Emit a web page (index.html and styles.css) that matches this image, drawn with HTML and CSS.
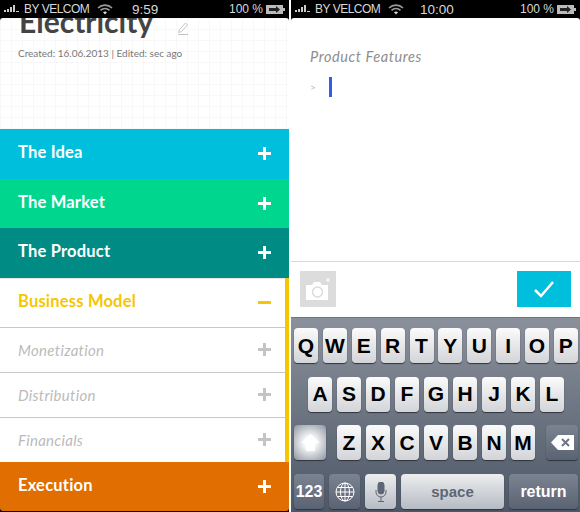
FILE: index.html
```html
<!DOCTYPE html>
<html lang="en">
  <head>
    <meta charset="UTF-8" />
    <title>Electricity</title>
    <link rel="stylesheet" href="styles.css">
  </head>
  <body>
    <div class="phones">
      <section class="screen screen-left">
        <div class="statusbar">
          <svg class="signal" width="16" height="8" viewBox="0 0 16 8"><path d="M0 5h2v2H0zM3 4h2v3H3zM6 2h2v5H6zM9 0h2v7H9zM12 6h3v1h-3z" fill="#ccc"/></svg>
          <span class="carrier">BY VELCOM</span>
          <svg class="wifi" width="16" height="11" viewBox="0 0 16 11"><path d="M1 4a10 10 0 0 1 14 0M3.500 6.300a6.500 6.500 0 0 1 9 0" fill="none" stroke="#999" stroke-width="1.600"/><path d="M6 8.300a3 3 0 0 1 4 0L8 10.500z" fill="#ddd"/></svg>
          <span class="clock clock-left">9:59</span>
          <span class="battery-text">100 %</span>
          <svg class="battery" width="19" height="9" viewBox="0 0 19 9"><path d="M0 0h17v3h2v3h-2v3H0z" fill="#bbb"/><path d="M3 3h7V1l4 3.500L10 8V6H3z" fill="#222"/></svg>
        </div>
        <div class="doc-head">
          <div class="doc-title-row">
            <h1 class="doc-title">Electricity</h1>
            <svg class="pencil" width="12" height="13" viewBox="0 0 12 13"><path d="M1 12.500h10M1.500 10.500l1-3L8.500 1l2 2-6 6.500z" fill="none" stroke="#c4c4c4"/></svg>
          </div>
          <p class="doc-meta">Created: 16.06.2013 | Edited: sec ago</p>
        </div>
        <div class="section section-idea"><span>The Idea</span><i class="plus"></i></div>
        <div class="section section-market"><span>The Market</span><i class="plus"></i></div>
        <div class="section section-product"><span>The Product</span><i class="plus"></i></div>
        <div class="open-group">
          <div class="section section-business"><span>Business Model</span><i class="minus"></i></div>
          <div class="sub"><span>Monetization</span><i class="plus plus-grey"></i></div>
          <div class="sub"><span>Distribution</span><i class="plus plus-grey"></i></div>
          <div class="sub"><span>Financials</span><i class="plus plus-grey"></i></div>
        </div>
        <div class="section section-execution"><span>Execution</span><i class="plus"></i></div>
      </section>

      <section class="screen screen-right">
        <div class="statusbar">
          <svg class="signal" width="16" height="8" viewBox="0 0 16 8"><path d="M0 5h2v2H0zM3 4h2v3H3zM6 2h2v5H6zM9 0h2v7H9zM12 6h3v1h-3z" fill="#ccc"/></svg>
          <span class="carrier">BY VELCOM</span>
          <svg class="wifi" width="16" height="11" viewBox="0 0 16 11"><path d="M1 4a10 10 0 0 1 14 0M3.500 6.300a6.500 6.500 0 0 1 9 0" fill="none" stroke="#999" stroke-width="1.600"/><path d="M6 8.300a3 3 0 0 1 4 0L8 10.500z" fill="#ddd"/></svg>
          <span class="clock clock-right">10:00</span>
          <span class="battery-text">100 %</span>
          <svg class="battery" width="19" height="9" viewBox="0 0 19 9"><path d="M0 0h17v3h2v3h-2v3H0z" fill="#bbb"/><path d="M3 3h7V1l4 3.500L10 8V6H3z" fill="#222"/></svg>
        </div>
        <div class="editor">
          <h2 class="editor-title">Product Features</h2>
          <div class="editor-line"><span class="prompt">&gt;</span><span class="caret"></span></div>
        </div>
        <div class="toolbar">
          <div class="photo-btn">
            <svg width="26" height="24" viewBox="0 0 26 24"><path d="M1 8h6l2-3h6l2 3h6v15H1z" fill="#fff"/><circle cx="12.500" cy="15" r="5" fill="none" stroke="#dcdcdc" stroke-width="1.500"/><path d="M21 3h4M23 1v4" stroke="#fff"/></svg>
          </div>
          <div class="done-btn">
            <svg width="22" height="18" viewBox="0 0 22 18"><path d="M2 10l6 6L20 2" fill="none" stroke="#fff" stroke-width="2.500"/></svg>
          </div>
        </div>
        <div class="keyboard">
          <div class="key-row">
            <b class="key">Q</b><b class="key">W</b><b class="key">E</b><b class="key">R</b><b class="key">T</b><b class="key">Y</b><b class="key">U</b><b class="key">I</b><b class="key">O</b><b class="key">P</b>
          </div>
          <div class="key-row key-row-home">
            <b class="key">A</b><b class="key">S</b><b class="key">D</b><b class="key">F</b><b class="key">G</b><b class="key">H</b><b class="key">J</b><b class="key">K</b><b class="key">L</b>
          </div>
          <div class="key-row">
            <b class="key key-fn key-shift">
              <svg width="19" height="17" viewBox="0 0 19 17"><path d="M9.500 0 19 9h-5v8H5V9H0z" fill="#fff"/></svg>
            </b>
            <div class="letters">
              <b class="key">Z</b><b class="key">X</b><b class="key">C</b><b class="key">V</b><b class="key">B</b><b class="key">N</b><b class="key">M</b>
            </div>
            <b class="key key-fn key-delete">
              <svg width="23" height="15" viewBox="0 0 23 15"><path d="M7 0h16v15H7L0 7.500z" fill="#fff"/><path d="M11 4l7 7M18 4l-7 7" stroke="#6d7686" stroke-width="2"/></svg>
            </b>
          </div>
          <div class="key-row key-row-bottom">
            <b class="key key-fn key-num">123</b>
            <b class="key key-fn key-globe">
              <svg width="20" height="20" viewBox="0 0 20 20" fill="none" stroke="#fff"><circle cx="10" cy="10" r="9"/><ellipse cx="10" cy="10" rx="4.500" ry="9"/><path d="M10 1v18M1 10h18M2.500 5.500h15M2.500 14.500h15"/></svg>
            </b>
            <b class="key key-light key-mic">
              <svg width="12" height="20" viewBox="0 0 12 20" fill="none" stroke="#5d6675"><rect x="3" y="0" width="6" height="12" rx="3" fill="#5d6675"/><path d="M1 8v2a5 5 0 0 0 10 0V8M6 15v4M3 19.500h6"/></svg>
            </b>
            <b class="key key-light key-space">space</b>
            <b class="key key-fn key-return">return</b>
          </div>
        </div>
      </section>
    </div>
  </body>
</html>
```

FILE: styles.css
```css
* {
  box-sizing: border-box;
}
html,
body {
  margin: 0;
  height: 512px;
  overflow: hidden;
  background: #fff;
}
.phones {
  display: flex;
  justify-content: space-between;
  width: 580px;
  height: 512px;
}
.screen {
  display: flex;
  flex-direction: column;
  width: 289px;
  height: 512px;
  overflow: hidden;
  background: #000;
}

/* status bar */
.statusbar {
  position: relative;
  z-index: 2;
  display: flex;
  align-items: center;
  flex: none;
  height: 18px;
  padding: 0 4px 0 4px;
  background: #000;
  color: #d8d8d8;
  font: 12px "Liberation Sans", sans-serif;
}
.signal {
  margin-right: 4px;
}
.carrier {
  width: 65px;
  letter-spacing: -0.500px;
  white-space: nowrap;
}
.wifi {
  margin-left: 8px;
}
.clock {
  font-size: 13.500px;
}
.clock-left {
  margin-left: 19px;
}
.clock-right {
  margin-left: 16px;
}
.battery-text {
  margin-left: auto;
  margin-right: 3px;
}

/* document header */
.doc-head {
  flex: none;
  height: 111px;
  padding-left: 19px;
  border-radius: 3px 3px 0 0;
  background-color: #fff;
  background-image: linear-gradient(#f8f8f8 1px, transparent 1px), linear-gradient(90deg, #f8f8f8 1px, transparent 1px);
  background-size: 11px 11px;
}
.doc-title-row {
  display: flex;
  align-items: center;
  margin-top: -16px;
}
.doc-title {
  margin: 0;
  color: #444;
  font: 700 30px/38px Lato, sans-serif;
}
.pencil {
  margin: 14px 0 0 24px;
}
.doc-meta {
  margin: 6px 0 0;
  margin-left: -1px;
  color: #777;
  font: 10px/14px Lato, sans-serif;
}

/* accordion */
.section,
.sub {
  display: flex;
  align-items: center;
  justify-content: space-between;
  padding: 0 18px 0 18px;
}
.section {
  flex: none;
  height: 49.600px;
  padding-bottom: 3px;
  color: #fff;
  font: 700 16.500px Lato, sans-serif;
  letter-spacing: 0.200px;
}
.section .plus,
.section .minus {
  margin-top: 3px;
}
.section-idea {
  background: #00bfdd;
}
.section-market {
  background: #00d68e;
}
.section-product {
  background: #008c85;
}
.section-execution {
  border-radius: 0 0 3px 3px;
  background: #e06e00;
}
.open-group {
  flex: none;
  border-right: 4px solid #f6c600;
  background: #fff;
}
.section-business {
  padding-right: 14px;
  color: #f6c600;
  height: 49px;
  border-top: 1px solid #e8e8e8;
}
.sub {
  height: 45px;
  padding-right: 14px;
  border-top: 1px solid #c8c8c8;
  color: #bbb;
  font: italic 15px Lato, sans-serif;
  letter-spacing: 0.300px;
}
.plus,
.minus {
  position: relative;
  display: block;
  width: 13px;
  height: 13px;
}
.plus::before,
.minus::before {
  content: "";
  position: absolute;
  left: 0;
  top: 5px;
  width: 13px;
  height: 3px;
  background: #fff;
}
.plus::after {
  content: "";
  position: absolute;
  left: 5px;
  top: 0;
  width: 3px;
  height: 13px;
  background: #fff;
}
.minus::before {
  background: #f6c600;
}
.plus-grey::before,
.plus-grey::after {
  background: #c4c4c4;
}

/* editor */
.editor {
  flex: none;
  height: 244px;
  padding: 30px 0 0 19px;
  border-bottom: 1px solid #d8d8d8;
  border-radius: 3px 3px 0 0;
  background: #fff;
}
.editor-title {
  margin: 0;
  color: #8e8e8e;
  font: italic 400 14.500px/18px Lato, sans-serif;
  letter-spacing: 0.600px;
}
.editor-line {
  display: flex;
  align-items: center;
  margin-top: 11px;
}
.prompt {
  width: 19px;
  color: #bbb;
  font: 10px Lato, sans-serif;
}
.caret {
  width: 3px;
  height: 20px;
  background: #2f5fe8;
}
.toolbar {
  display: flex;
  align-items: center;
  justify-content: space-between;
  flex: none;
  height: 55px;
  padding: 0 9px 1px 9px;
  background: #fff;
}
.photo-btn {
  display: flex;
  align-items: center;
  justify-content: center;
  width: 36px;
  height: 36px;
  background: #dcdcdc;
}
.done-btn {
  display: flex;
  align-items: center;
  justify-content: center;
  width: 54px;
  height: 36px;
  background: #00bfdd;
}

/* keyboard */
.keyboard {
  display: flex;
  flex-direction: column;
  gap: 13.700px;
  flex: 1;
  padding: 10px 2px 0 3px;
  border-top: 1px solid #6f7480;
  background: linear-gradient(#8b919c, #4d5766);
}
.key-row {
  display: flex;
  justify-content: space-between;
  height: 35px;
}
.key-row-home {
  padding: 0 14px;
}
.letters {
  display: flex;
  gap: 5px;
}
.key {
  display: flex;
  align-items: center;
  justify-content: center;
  width: 24px;
  height: 35px;
  border-radius: 4px;
  background: linear-gradient(#fbfbfb, #d3d4d8);
  box-shadow: 0 1px 1px #30343c;
  color: #000;
  font: 700 21px "Liberation Sans", sans-serif;
}
.key-fn {
  background: linear-gradient(#7b8391, #5a6373);
  color: #fff;
  font-size: 16px;
}
.key-shift {
  width: 32px;
  background: radial-gradient(circle, #fff 20%, #9ba1ac 90%);
}
.key-delete {
  width: 32px;
}
.key-light {
  background: linear-gradient(#eceded, #b6bbc4);
  color: #5d6675;
  font-size: 15px;
}
.key-row-bottom {
  gap: 5px;
}
.key-num {
  width: 30px;
}
.key-globe {
  width: 31px;
}
.key-mic {
  width: 31px;
}
.key-space {
  width: 103px;
}
.key-return {
  flex: 1;
}
```
